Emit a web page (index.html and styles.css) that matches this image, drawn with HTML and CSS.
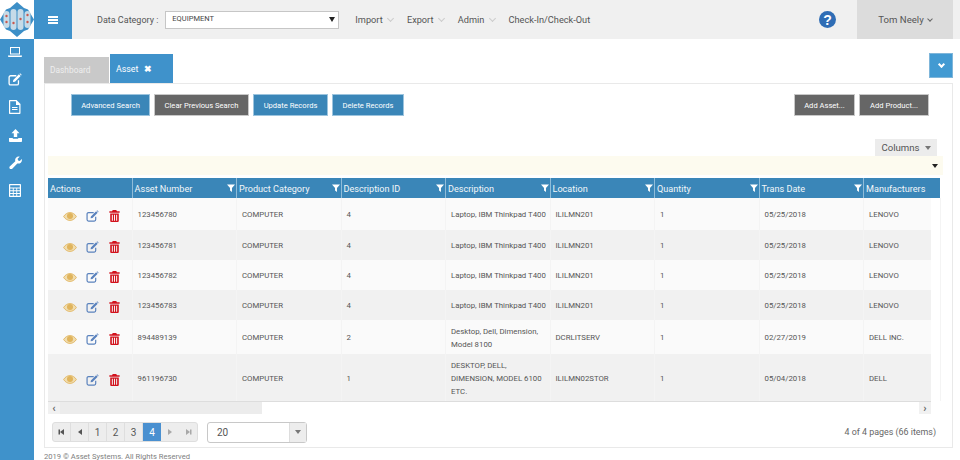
FILE: index.html
```html
<!DOCTYPE html>
<html lang="en">
<head>
    <meta charset="utf-8"/>
    <title>Asset</title>
    <link rel="stylesheet" href="styles.css">
</head>
<body>
<svg class="sprites" width="0" height="0">
    <symbol id="eye" viewBox="0 0 14 9"><path fill="#f0dcae" stroke="#e3bb6c" d="M.6 4.500C2.200 2 4.400.6 7 .6s4.800 1.400 6.400 3.900C11.800 7 9.600 8.400 7 8.400S2.200 7 .6 4.500z"/><circle cx="7" cy="4" r="3" fill="#e0b45c"/></symbol>
    <symbol id="edit" viewBox="0 0 16 15"><path fill="none" stroke="currentColor" stroke-width="1.500" d="M12 8.500V12a1.800 1.800 0 0 1-1.800 1.800H3A1.800 1.800 0 0 1 1.200 12V5A1.800 1.800 0 0 1 3 3.200h6.500"/><path fill="currentColor" d="M6 8l6.500-6.500 2 2L8 10l-2.400.4zM13.200.8l.7-.5 1.800 1.800-.6.8z"/></symbol>
    <symbol id="trash" viewBox="0 0 12 14"><path fill="currentColor" d="M4 0h4l.9 1.600H12v1.500H0V1.600h3.100zM1 4h10v8.500c0 .8-.6 1.500-1.400 1.500H2.400C1.600 14 1 13.300 1 12.500zm1.900 1.500v7h1.200v-7zm2.500 0v7h1.200v-7zm2.500 0v7h1.200v-7z"/></symbol>
    <symbol id="funnel" viewBox="0 0 10 10"><path fill="currentColor" d="M0 .5h10L6.200 5v5L3.800 8.200V5z"/></symbol>
</svg>

<div class="topbar">
    <div class="logo">
        <svg width="34" height="39" viewBox="0 0 34 39">
            <path fill="#3d8fc7" d="M17 2l7 6 4 1.500L34 19.500 28 29.500 24 31l-7 6-7-6-4-1.500L0 19.500 6 9.500 10 8z"/>
            <rect x="3.500" y="11" width="6" height="17" rx="3" fill="#c6dbe8"/>
            <rect x="10.500" y="9" width="6" height="21" rx="3" fill="#c6dbe8"/>
            <rect x="17.500" y="9" width="6" height="21" rx="3" fill="#c6dbe8"/>
            <rect x="24.500" y="11" width="6" height="17" rx="3" fill="#c6dbe8"/>
            <g fill="#c9584e">
                <circle cx="6.500" cy="16" r="1.200"/><circle cx="6.500" cy="22" r="1.200"/>
                <circle cx="13.500" cy="23" r="1.200"/><circle cx="20.500" cy="19" r="1.200"/>
                <circle cx="27.500" cy="15" r="1.200"/><circle cx="27.500" cy="22" r="1.200"/>
            </g>
        </svg>
    </div>
    <div class="menu_toggle"><span class="burger"></span></div>
    <div class="category">
        <label>Data Category :</label>
        <div class="category_select">EQUIPMENT<span class="select_arrow"></span></div>
    </div>
    <nav class="top_nav">
        <span>Import <i class="chev"></i></span>
        <span>Export <i class="chev"></i></span>
        <span>Admin <i class="chev"></i></span>
        <span>Check-In/Check-Out</span>
    </nav>
    <svg class="help" width="17" height="17" viewBox="0 0 17 17">
        <circle cx="8.500" cy="8.500" r="8.500" fill="#2f6db5"/>
        <text x="8.500" y="13.500" text-anchor="middle" class="help_mark">?</text>
    </svg>
    <div class="user">Tom Neely <i class="chev dark"></i></div>
</div>

<div class="page">
    <div class="sidebar">
        <svg width="14" height="12" viewBox="0 0 14 12"><path fill="#fff" d="M2 1h10v7.500H2zm1 1v5.500h8V2zM0 9.500h14V10c0 .6-.5 1-1 1H1c-.5 0-1-.4-1-1z"/></svg>
        <svg width="14" height="13" viewBox="0 0 16 15"><use href="#edit"/></svg>
        <svg width="12" height="14" viewBox="0 0 12 14"><path fill="#fff" d="M1 0h6.500L11.500 4v9c0 .6-.4 1-1 1H1c-.6 0-1-.4-1-1V1c0-.6.4-1 1-1zm.2 1.200v11.600h9.100V5H7V1.200zM3 7h5.500v1H3zm0 2h5.500v1H3z"/></svg>
        <svg width="13" height="13" viewBox="0 0 13 13"><path fill="#fff" d="M6.500 0l4 4.200H8.200V8H4.800V4.200H2.500zM0 9h3.800v.7h5.400V9H13v3.200c0 .4-.3.800-.8.800H.8c-.5 0-.8-.4-.8-.8z"/></svg>
        <svg width="13" height="13" viewBox="0 0 13 13"><path fill="#fff" d="M12.800 3c.4 1.400 0 2.800-1 3.700-1 .9-2.300 1.100-3.500.7L3 13c-.6.4-1.500.3-2.100-.3C.3 12.100.2 11.200.7 10.600l5.600-5.400c-.4-1.200-.1-2.600.8-3.500C8 .7 9.400.3 10.700.7L8.600 2.800l.5 1.800 1.700.5z"/></svg>
        <svg width="12" height="13" viewBox="0 0 12 13"><path fill="#fff" d="M1 0h10c.6 0 1 .4 1 1v11c0 .6-.4 1-1 1H1c-.6 0-1-.4-1-1V1c0-.6.4-1 1-1zm.2 1.200v2.300h9.600V1.200zm0 3.300v1.700h2.600V4.500zm3.500 0v1.700h2.600V4.500zm3.500 0v1.700h2.600V4.500zM1.200 7.200v1.700h2.600V7.200zm3.500 0v1.700h2.600V7.200zm3.500 0v1.700h2.600V7.200zM1.200 9.900v1.900h2.600V9.900zm3.500 0v1.900h2.600V9.900zm3.500 0v1.900h2.600V9.900z"/></svg>
    </div>

    <div class="main">
        <div class="tabs">
            <div class="tab tab_off">Dashboard</div>
            <div class="tab tab_on">Asset <b class="tab_x">&#10006;</b></div>
            <button class="tabs_more"><i class="chev white"></i></button>
        </div>

        <div class="panel">
            <div class="toolbar">
                <button class="btn blue w79">Advanced Search</button>
                <button class="btn grey w95">Clear Previous Search</button>
                <button class="btn blue w75">Update Records</button>
                <button class="btn blue w72">Delete Records</button>
                <button class="btn grey w61 push">Add Asset...</button>
                <button class="btn grey w70">Add Product...</button>
            </div>
            <div class="columns_row"><div class="columns_btn">Columns <span class="caret"></span></div></div>
            <div class="filter_band"><span class="caret dark"></span></div>

            <div class="grid">
                <table>
                    <colgroup>
                        <col class="c1"><col class="c2"><col class="c2"><col class="c2"><col class="c2"><col class="c2"><col class="c2"><col class="c2"><col class="c3">
                    </colgroup>
                    <thead>
                    <tr>
                        <th>Actions</th>
                        <th>Asset Number<svg class="funnel"><use href="#funnel"/></svg></th>
                        <th>Product Category<svg class="funnel"><use href="#funnel"/></svg></th>
                        <th>Description ID<svg class="funnel"><use href="#funnel"/></svg></th>
                        <th>Description<svg class="funnel"><use href="#funnel"/></svg></th>
                        <th>Location<svg class="funnel"><use href="#funnel"/></svg></th>
                        <th>Quantity<svg class="funnel"><use href="#funnel"/></svg></th>
                        <th>Trans Date<svg class="funnel"><use href="#funnel"/></svg></th>
                        <th>Manufacturers</th>
                    </tr>
                    </thead>
                    <tbody id="rows"></tbody>
                </table>
                <div class="hscroll">
                    <span class="hscroll_btn">&#8249;</span>
                    <span class="hscroll_thumb"></span>
                    <span class="hscroll_btn right">&#8250;</span>
                </div>
            </div>

            <div class="pager_row">
                <div class="pager">
                    <span class="pg"><i class="tri first"></i></span>
                    <span class="pg"><i class="tri"></i></span>
                    <span class="pg">1</span>
                    <span class="pg">2</span>
                    <span class="pg">3</span>
                    <span class="pg current">4</span>
                    <span class="pg off"><i class="tri next"></i></span>
                    <span class="pg off"><i class="tri last"></i></span>
                </div>
                <div class="page_size">20<span class="page_size_btn"><span class="caret"></span></span></div>
                <div class="page_info">4 of 4 pages (66 items)</div>
            </div>
        </div>
        <div class="footer">2019 &copy; Asset Systems. All Rights Reserved</div>
    </div>
</div>

<script>
    const rows = [
        ['123456780', 'COMPUTER', '4', 'Laptop, IBM Thinkpad T400', 'ILILMN201', '1', '05/25/2018', 'LENOVO', 'h32'],
        ['123456781', 'COMPUTER', '4', 'Laptop, IBM Thinkpad T400', 'ILILMN201', '1', '05/25/2018', 'LENOVO', 'h30'],
        ['123456782', 'COMPUTER', '4', 'Laptop, IBM Thinkpad T400', 'ILILMN201', '1', '05/25/2018', 'LENOVO', 'h30'],
        ['123456783', 'COMPUTER', '4', 'Laptop, IBM Thinkpad T400', 'ILILMN201', '1', '05/25/2018', 'LENOVO', 'h30'],
        ['894489139', 'COMPUTER', '2', 'Desktop, Dell, Dimension, Model 8100', 'DCRLITSERV', '1', '02/27/2019', 'DELL INC.', 'h34'],
        ['961196730', 'COMPUTER', '1', 'DESKTOP, DELL, DIMENSION, MODEL 6100 ETC.', 'ILILMN02STOR', '1', '05/04/2018', 'DELL', 'h47']
    ];
    const icons = '<svg class="ic_eye"><use href="#eye"/></svg><svg class="ic_edit"><use href="#edit"/></svg><svg class="ic_trash"><use href="#trash"/></svg>';

    document.getElementById('rows').innerHTML = rows.map(r => {
        const cells = r.slice(0, 8).map(v => `<td>${v}</td>`).join('');
        return `<tr class="${r[8]}"><td class="actions">${icons}</td>${cells}</tr>`;
    }).join('');
</script>
</body>
</html>
```

FILE: styles.css
```css
* {
    box-sizing: border-box;
}

html, body {
    margin: 0;
    height: 460px;
    overflow: hidden;
}

body {
    font-family: Roboto, "Liberation Sans", sans-serif;
    font-size: 10px;
    color: #555;
    background: #fff;
    position: relative;
}

.sprites {
    position: absolute;
}

i {
    font-style: normal;
}

.topbar {
    display: flex;
    align-items: center;
    height: 39px;
    background: #f0f0f0;
}

.logo {
    width: 34px;
    height: 39px;
    background: #fff;
}

.logo svg {
    display: block;
}

.menu_toggle {
    display: flex;
    align-items: center;
    justify-content: center;
    width: 38px;
    height: 39px;
    background: #3f92cb;
}

.burger {
    width: 10px;
    height: 8px;
    border-top: 2px solid #fff;
    border-bottom: 2px solid #fff;
    position: relative;
}

.burger::after {
    content: "";
    position: absolute;
    left: 0;
    right: 0;
    top: 1px;
    height: 2px;
    background: #fff;
}

.category {
    display: flex;
    align-items: center;
    margin-left: 25px;
    font-size: 9px;
    color: #555;
}

.category_select {
    display: flex;
    align-items: center;
    justify-content: space-between;
    width: 174px;
    height: 18px;
    margin-left: 7px;
    padding: 0 3px 2px 6px;
    background: #fff;
    border: 1px solid #c6c6c6;
    font-size: 7.5px;
    color: #444;
}

.select_arrow {
    width: 0;
    height: 0;
    border-left: 3.5px solid transparent;
    border-right: 3.5px solid transparent;
    border-top: 5px solid #222;
    margin-top: 2px;
}

.top_nav {
    display: flex;
    margin-left: 16px;
    gap: 12px;
    font-size: 9.2px;
    color: #555;
}

.top_nav span {
    white-space: nowrap;
}

.chev {
    display: inline-block;
    width: 5px;
    height: 5px;
    margin: 0 2px 2px 3px;
    border-right: 1px solid #ccc;
    border-bottom: 1px solid #ccc;
    transform: rotate(45deg);
}

.chev.dark {
    width: 4px;
    height: 4px;
    margin: 0 0 2px 4px;
    border-color: #666;
}

.chev.white {
    margin: 0 0 3px;
    border-right: 2px solid #fff;
    border-bottom: 2px solid #fff;
}

.help {
    margin-left: auto;
    margin-right: 21px;
}

.help_mark {
    font-family: "Liberation Sans", sans-serif;
    font-size: 14px;
    font-weight: 700;
    fill: #fff;
}

.user {
    display: flex;
    align-items: center;
    justify-content: center;
    width: 96px;
    height: 39px;
    margin-right: 7px;
    background: #dcdcdc;
    font-size: 9.6px;
    color: #555;
}

.page {
    display: flex;
    height: 421px;
}

.sidebar {
    display: flex;
    flex-direction: column;
    align-items: center;
    flex: 0 0 34px;
    padding: 7px 4px 0 0;
    gap: 14.5px;
    background: #3f92cb;
    color: #fff;
}

.main {
    flex: 1;
    padding: 15px 7px 0 10px;
    min-width: 0;
}

.tabs {
    display: flex;
    align-items: flex-end;
    height: 29px;
}

.tab {
    display: flex;
    align-items: center;
}

.tab_off {
    width: 65px;
    height: 26px;
    margin-right: 1px;
    padding-left: 6px;
    background: #c9c9c9;
    color: #eee;
    font-size: 8.4px;
}

.tab_on {
    width: 63px;
    height: 29px;
    padding-left: 6px;
    background: #3f92cb;
    color: #fff;
    font-size: 8.8px;
}

.tab_x {
    margin-left: 6px;
    font-size: 9px;
}

.tabs_more {
    display: flex;
    align-items: center;
    justify-content: center;
    width: 24px;
    height: 25px;
    margin: 0 0 5px auto;
    padding: 0;
    border: 1px solid #7fb6da;
    background: #429ad2;
}

.panel {
    display: flex;
    flex-direction: column;
    height: 365px;
    padding: 10px 3px 0;
    border: 1px solid #e9e9e9;
}

.toolbar {
    display: flex;
    gap: 4px;
    padding: 0 20px 0 23px;
}

.btn {
    height: 22px;
    padding: 0;
    border: 1px solid #d8d8d8;
    font: 7.6px Roboto, "Liberation Sans", sans-serif;
    color: #fff;
}

.blue {
    background: #3a86b8;
    border-color: #9cc4de;
}

.grey {
    background: #666;
    border-color: #c8c8c8;
}

.w61 {
    width: 61px;
}

.w70 {
    width: 70px;
}

.w72 {
    width: 72px;
}

.w75 {
    width: 75px;
}

.w79 {
    width: 79px;
}

.w95 {
    width: 95px;
}

.btn.push {
    margin-left: auto;
}

.columns_row {
    display: flex;
    justify-content: flex-end;
    height: 17px;
    margin-top: 23px;
    padding-right: 12px;
}

.columns_btn {
    display: flex;
    align-items: center;
    justify-content: center;
    gap: 5px;
    width: 62px;
    height: 17px;
    background: #ececec;
    font-size: 9.6px;
    color: #555;
}

.caret {
    display: inline-block;
    width: 0;
    height: 0;
    border-left: 3.5px solid transparent;
    border-right: 3.5px solid transparent;
    border-top: 4px solid #777;
}

.caret.dark {
    border-top-color: #222;
}

.filter_band {
    display: flex;
    justify-content: flex-end;
    align-items: center;
    height: 19px;
    margin-right: 6px;
    padding-right: 5px;
    background: #fdfbef;
}

.grid {
    width: 892px;
    margin-top: 3px;
}

table {
    table-layout: fixed;
    width: 892px;
    border-collapse: collapse;
}

.c1 {
    width: 84px;
}

.c2 {
    width: 104.5px;
}

.c3 {
    width: 76.5px;
}

th {
    position: relative;
    height: 20px;
    padding: 1px 0 0 2px;
    background: #3a86b8;
    border-right: 1px solid #8fbcd9;
    color: #f2f6f9;
    font-size: 9.1px;
    font-weight: 400;
    text-align: left;
    white-space: nowrap;
    overflow: hidden;
}

th:last-child {
    border-right: none;
}

.funnel {
    position: absolute;
    right: 1px;
    top: 6px;
    width: 8px;
    height: 8px;
    color: #fff;
}

td {
    padding: 1px 2px 0 5px;
    border-right: 1px solid #f4f4f4;
    background: #fafafa;
    font-size: 7.8px;
    line-height: 13px;
    color: #555;
    vertical-align: middle;
}

tbody tr:nth-child(even) td {
    background: #f1f1f1;
}

tbody td:last-child {
    box-shadow: inset -9px 0 0 #fff;
}

.h30 {
    height: 30px;
}

.h32 {
    height: 32px;
}

.h34 {
    height: 34px;
}

.h47 {
    height: 47px;
}

.actions {
    padding: 4px 0 0 15px;
    white-space: nowrap;
}

.actions svg {
    vertical-align: middle;
}

.ic_eye {
    width: 14px;
    height: 9px;
}

.ic_edit {
    width: 13px;
    height: 12px;
    margin-left: 9px;
    color: #5a82bd;
}

.ic_trash {
    width: 11px;
    height: 12px;
    margin-left: 10px;
    color: #d2121c;
}

.hscroll {
    display: flex;
    align-items: stretch;
    width: 883px;
    height: 13px;
    background: #fff;
    border-top: 1px solid #ddd;
    color: #666;
}

.hscroll_btn {
    display: flex;
    align-items: center;
    justify-content: center;
    width: 12px;
    background: #f1f1f1;
    font-size: 11px;
    font-weight: 700;
}

.hscroll_btn.right {
    margin-left: auto;
}

.hscroll_thumb {
    width: 202px;
    background: #ececec;
}

.pager_row {
    display: flex;
    align-items: center;
    height: 20px;
    margin-top: 8px;
    padding: 0 13px 0 4px;
}

.pager {
    display: flex;
    height: 20px;
    background: #ededed;
    border: 1px solid #dedede;
    border-radius: 3px;
}

.pg {
    display: flex;
    align-items: center;
    justify-content: center;
    width: 18px;
    border-right: 1px solid #dedede;
    font-size: 10px;
    color: #555;
}

.pg.current {
    background: #4a90d0;
    color: #fff;
    border-right: none;
}

.pg.off {
    border-right: none;
    opacity: .45;
}

.tri {
    width: 0;
    height: 0;
    border-top: 3px solid transparent;
    border-bottom: 3px solid transparent;
    border-right: 4px solid #555;
}

.tri.first {
    box-shadow: -2px 0 0 -.5px #555;
}

.tri.next {
    border-right: none;
    border-left: 4px solid #555;
}

.tri.last {
    border-right: none;
    border-left: 4px solid #555;
    box-shadow: 2px 0 0 -.5px #555;
}

.page_size {
    display: flex;
    align-items: center;
    justify-content: space-between;
    width: 100px;
    height: 21px;
    margin-left: 9px;
    padding-left: 9px;
    border: 1px solid #c8c8c8;
    border-radius: 3px;
    font-size: 10px;
    color: #555;
}

.page_size_btn {
    display: flex;
    align-items: center;
    justify-content: center;
    width: 17px;
    height: 19px;
    background: #ededed;
    border-left: 1px solid #ddd;
}

.page_info {
    margin-left: auto;
    font-size: 8.9px;
    color: #666;
}

.footer {
    margin-top: 4px;
    font-size: 7.6px;
    color: #808080;
}
```
